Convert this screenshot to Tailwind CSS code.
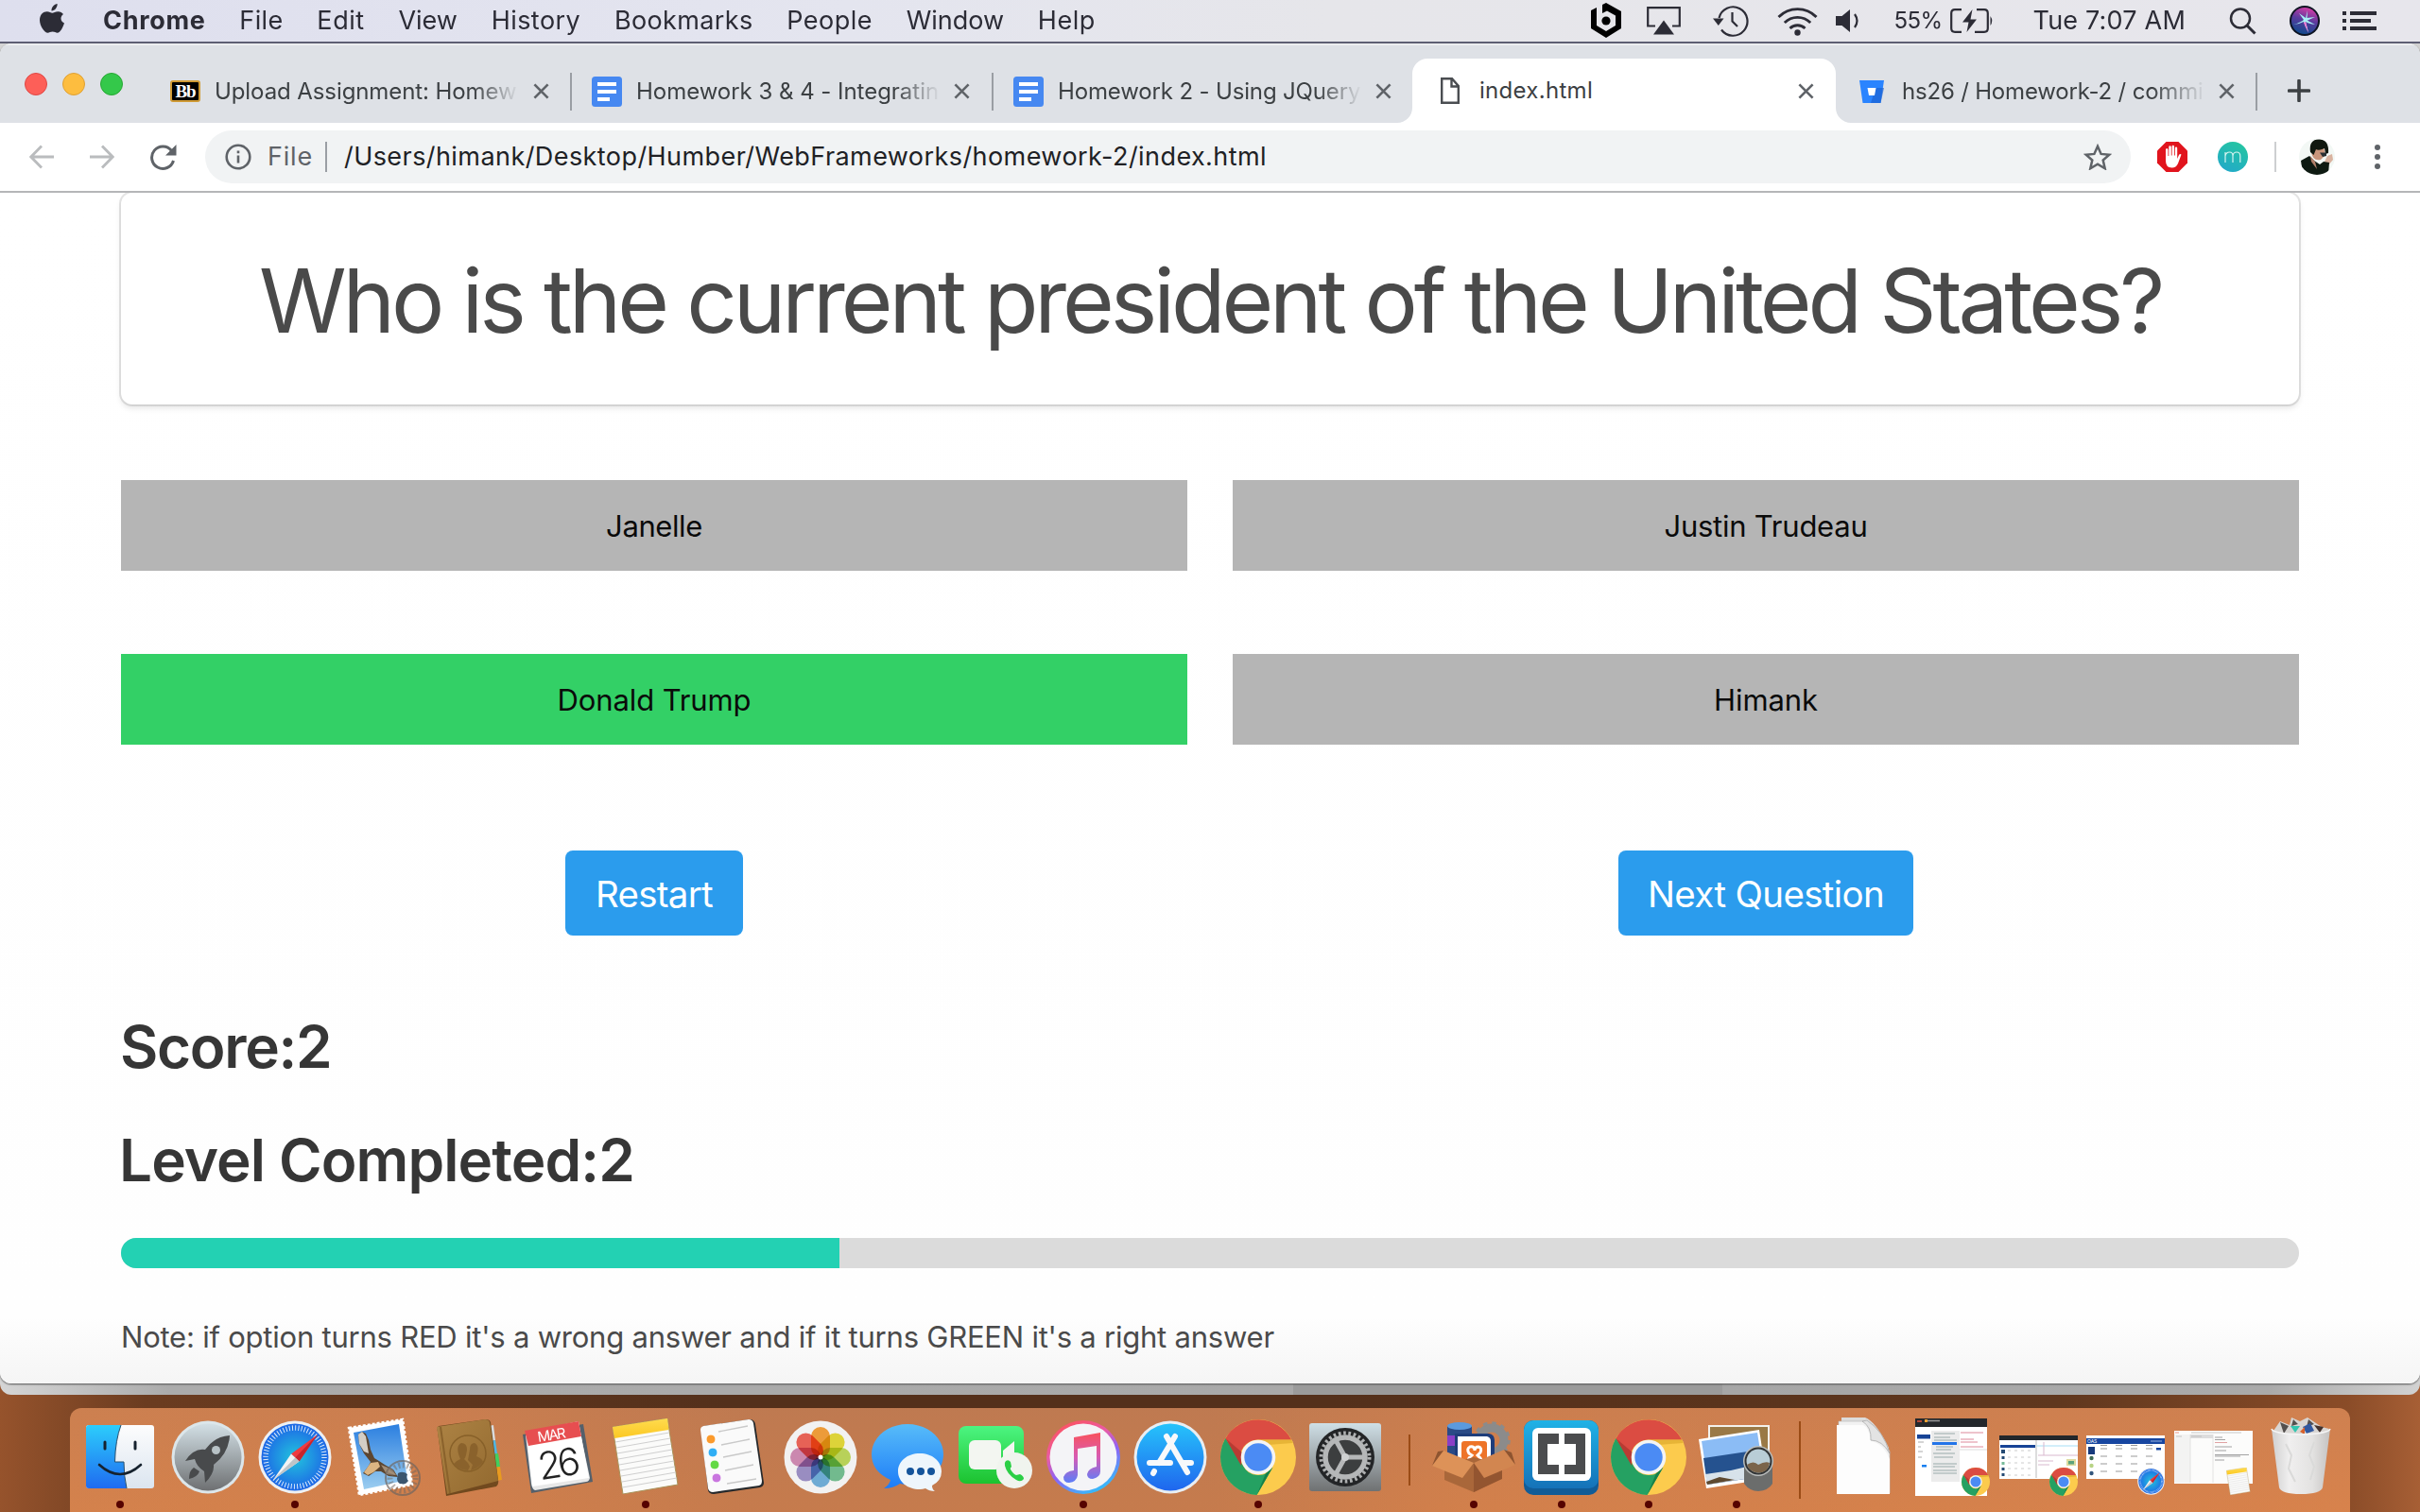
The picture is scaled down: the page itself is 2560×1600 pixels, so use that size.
<!DOCTYPE html>
<html lang="en">
<head>
<meta charset="utf-8">
<title>index.html</title>
<script src="https://cdn.jsdelivr.net/npm/@tailwindcss/browser@4"></script>
</head>
<body class="w-[2560px] h-[1600px] overflow-hidden font-['Inter','Liberation_Sans',sans-serif] bg-[linear-gradient(90deg,#96532c_0%,#6b3c20_6%,#54301b_30%,#54301b_55%,#5f371e_85%,#8a4c28_97%,#a75f35_100%)] flex flex-col">

<svg width="0" height="0" class="absolute">
  <defs>
    <linearGradient id="gFinder" x1="0" y1="0" x2="0" y2="1"><stop offset="0" stop-color="#2ccdfc"/><stop offset="1" stop-color="#1f6bf0"/></linearGradient>
    <linearGradient id="gWhite" x1="0" y1="0" x2="0" y2="1"><stop offset="0" stop-color="#fdfdfd"/><stop offset="1" stop-color="#dbe5f0"/></linearGradient>
    <linearGradient id="gRocket" x1="0" y1="0" x2="0" y2="1"><stop offset="0" stop-color="#d3e0e6"/><stop offset="1" stop-color="#6e7072"/></linearGradient>
    <radialGradient id="gSafari"><stop offset="0" stop-color="#22c4dd"/><stop offset="1" stop-color="#1d67e6"/></radialGradient>
    <linearGradient id="gSky" x1="0" y1="0" x2="0" y2="1"><stop offset="0" stop-color="#2b7fe0"/><stop offset="1" stop-color="#9bcdf0"/></linearGradient>
    <linearGradient id="gBook" x1="0" y1="0" x2="1" y2="1"><stop offset="0" stop-color="#ad8344"/><stop offset="1" stop-color="#92692f"/></linearGradient>
    <linearGradient id="gMsg" x1="0" y1="0" x2="0" y2="1"><stop offset="0" stop-color="#57bcf9"/><stop offset="1" stop-color="#1d7cf8"/></linearGradient>
    <linearGradient id="gFace" x1="0" y1="0" x2="0" y2="1"><stop offset="0" stop-color="#4cf581"/><stop offset="1" stop-color="#1cc22f"/></linearGradient>
    <linearGradient id="gTunes" x1="0.2" y1="0" x2="0.7" y2="1"><stop offset="0" stop-color="#ff5257"/><stop offset=".35" stop-color="#e85ba8"/><stop offset=".6" stop-color="#8e62f5"/><stop offset="1" stop-color="#2cc3fb"/></linearGradient>
    <linearGradient id="gNote" x1="0" y1="0" x2="0" y2="1"><stop offset="0" stop-color="#f9525c"/><stop offset=".5" stop-color="#d65bb5"/><stop offset="1" stop-color="#5c7df8"/></linearGradient>
    <linearGradient id="gStore" x1="0" y1="0" x2="0" y2="1"><stop offset="0" stop-color="#26c3fb"/><stop offset="1" stop-color="#1f66ee"/></linearGradient>
    <linearGradient id="gPref" x1="0" y1="0" x2="0" y2="1"><stop offset="0" stop-color="#cfdfe6"/><stop offset="1" stop-color="#6f7172"/></linearGradient>
    <linearGradient id="gBrk" x1="0" y1="0" x2="0" y2="1"><stop offset="0" stop-color="#20b2e6"/><stop offset="1" stop-color="#1572b8"/></linearGradient>
    <linearGradient id="gYel" x1="0" y1="0" x2="0" y2="1"><stop offset="0" stop-color="#ffdb4f"/><stop offset="1" stop-color="#fbc823"/></linearGradient>
    <linearGradient id="gTrash" x1="0" y1="0" x2="1" y2="0"><stop offset="0" stop-color="#cfcfcf"/><stop offset=".3" stop-color="#f0efef"/><stop offset=".7" stop-color="#e3e2e1"/><stop offset="1" stop-color="#c4c2c1"/></linearGradient>
    <linearGradient id="gM" x1=".8" y1="0" x2=".3" y2="1"><stop offset="0" stop-color="#25c6a0"/><stop offset="1" stop-color="#22aac8"/></linearGradient>
    <linearGradient id="gSiri" x1=".6" y1="0" x2=".3" y2="1"><stop offset="0" stop-color="#d23ca6"/><stop offset=".45" stop-color="#5a3b9e"/><stop offset="1" stop-color="#0d4a8c"/></linearGradient>
    <clipPath id="cAv"><circle cx="19" cy="19" r="19"/></clipPath>

    <symbol id="chrome" viewBox="0 0 80 80">
      <circle cx="40" cy="40" r="40" fill="#fccb4d"/>
      <path d="M5.4 20A40 40 0 0 1 75.200 21.500H40A18.500 18.500 0 0 0 22 46Z" fill="#db4c42"/>
      <path d="M5.400 20A40 40 0 0 0 38.500 80L55.500 50.500A18 18 0 0 1 24 49Z" fill="#25a162"/>
      <path d="M40 21.500H75.200L76.500 25L50 27Z" fill="#d9a528" opacity=".6"/>
      <path d="M38.500 80L55.500 50.500L48 57Z" fill="#178048"/>
      <path d="M5.400 20L22 49L23 35Z" fill="#b83b33"/>
      <circle cx="40" cy="40" r="18.300" fill="#f4f4f4"/><circle cx="40" cy="40" r="14.700" fill="#4b8bf4"/>
    </symbol>
    <symbol id="safari" viewBox="0 0 78 78">
      <circle cx="39" cy="39" r="38.500" fill="#eef0f2"/><circle cx="39" cy="39" r="35.500" fill="url(#gSafari)"/>
      <circle cx="39" cy="39" r="31" fill="none" stroke="#fff" stroke-width="5.500" stroke-dasharray="1 2.246" opacity=".85"/>
      <path d="M63 15L43.500 43.500L35 35.500Z" fill="#ee3b40"/><path d="M63 15L43.500 43.500L39.300 39.400Z" fill="#c8252c"/>
      <path d="M16 63L35 35.500L43.500 43.500Z" fill="#f3f3f3"/><path d="M16 63L39.300 39.400L43.500 43.500Z" fill="#bfc4c8"/>
    </symbol>
    <symbol id="notes" viewBox="0 0 70 80">
      <path d="M0 9L58 0L69 70L11 80Z" fill="#fbfbfa" stroke="#a8925a" stroke-width="1"/>
      <path d="M0 9L58 0L59.500 12L2 21Z" fill="url(#gYel)"/>
      <path d="M3 25L60 15M4 31L61 21M5 37L62 27M6 43L63 33M7 49L64 39M8 55L65 45M9 61L66 51M10 67L67 57M10.500 73L68 63" stroke="#cfcfcf" stroke-width="1"/>
    </symbol>
    <symbol id="docs" viewBox="0 0 32 32"><rect width="32" height="32" rx="3.500" fill="#4688f1"/><path d="M6 8H26M6 16H26M6 24H19" stroke="#fff" stroke-width="4"/></symbol>
    <symbol id="close" viewBox="0 0 18 18"><path d="M1.500 1.500L16.500 16.500M16.500 1.500L1.500 16.500" stroke="#5f6368" stroke-width="2.800"/></symbol>
  </defs>
</svg>

<!-- macOS menu bar -->
<header class="h-[44px] shrink-0 bg-[linear-gradient(90deg,#dedfee_0%,#e4e5ef_35%,#e6e6ea_55%,#e7e6ec_100%)] flex items-center text-[27px] text-[#2c2c36] whitespace-nowrap">
  <svg class="ml-[41px] w-[28px] h-[32px] mb-[5px] shrink-0" viewBox="0 0 28 32"><path d="M19.600 0C19.800 2 19 3.900 17.900 5.200C16.700 6.600 15 7.500 13.500 7.400C13.300 5.500 14.100 3.600 15.200 2.400C16.400 1 18.200.1 19.600 0ZM26 11C22.500 13.200 22.600 18.500 27 20.500C25.700 24.600 22.800 30.800 19.700 30.800C17.800 30.800 17 29.600 14.600 29.600C12.200 29.600 11.300 30.800 9.500 30.800C6 30.800 1 23.500 1 17.300C1 11.500 4.800 8.300 8.700 8.300C11.100 8.300 12.900 9.700 14.300 9.700C15.700 9.700 17.900 8.100 20.600 8.200C22.800 8.300 24.800 9.300 26 11Z" fill="#2c2c36"/></svg>
  <nav class="ml-[40px] pt-[1px] flex gap-[35.700px]">
    <span class="font-bold tracking-[0.7px]">Chrome</span><span class="tracking-[0.4px]">File</span><span class="tracking-[0.56px]">Edit</span><span>View</span><span class="tracking-[0.46px]">History</span><span class="tracking-[0.36px]">Bookmarks</span><span class="tracking-[0.5px]">People</span><span>Window</span><span class="tracking-[0.5px]">Help</span>
  </nav>
  <div class="flex items-center ml-auto mr-[45px]">
    <svg class="w-[34px] h-[38px]" viewBox="0 0 34 38"><path d="M17 0L33 9V27L17 37L1 27V8L7 5V24L17 30L27 24V13.500L18 8.500L13 11V2Z" fill="#000"/><circle cx="17" cy="19" r="4.600"/></svg>
    <svg class="ml-[26px] w-[36px] h-[30px]" viewBox="0 0 36 30"><path d="M9 20.500H1.200V1.200H34.800V20.500H27" fill="none" stroke="#2c2c36" stroke-width="2.200"/><path d="M18 14.500L29 29.500H7Z" fill="#2c2c36"/></svg>
    <svg class="ml-[34px] w-[38px] h-[34px]" viewBox="0 0 38 34"><path d="M6.500 14A15.200 15.200 0 1 1 9 26.500" fill="none" stroke="#2c2c36" stroke-width="2.200"/><path d="M0 14.500H11.500L5.800 22Z" fill="#2c2c36"/><path d="M20.500 8V17.500L26 23" fill="none" stroke="#2c2c36" stroke-width="2.200"/></svg>
    <svg class="ml-[30px] w-[43px] h-[31px]" viewBox="0 0 43 31"><g fill="none" stroke="#2c2c36" stroke-width="2.900"><path d="M1.500 11A28 28 0 0 1 41.500 11"/><path d="M7.800 17A19.500 19.500 0 0 1 35.200 17"/><path d="M13.500 23A11.500 11.500 0 0 1 29.500 23"/></g><circle cx="21.500" cy="27.500" r="3.200" fill="#2c2c36"/></svg>
    <svg class="ml-[18px] w-[27px] h-[26px]" viewBox="0 0 27 26"><path d="M1 8H7.500L16 1V25L7.500 18H1Z" fill="#2c2c36"/><path d="M21 6Q26 13 21 20" fill="none" stroke="#2c2c36" stroke-width="2.200"/></svg>
    <span class="ml-[36px] text-[24px] tracking-[-0.6px]">55%</span>
    <svg class="ml-[8px] w-[46px] h-[26px]" viewBox="0 0 46 26"><path d="M12 1.200H5Q1.200 1.200 1.200 5V21Q1.200 24.800 5 24.800H12M28 1.200H36Q39.800 1.200 39.800 5V21Q39.800 24.800 36 24.800H26" fill="none" stroke="#2c2c36" stroke-width="2.200"/><path d="M23.500 1L13 14.500H19.500L17.500 25L28 11.500H21.500Z" fill="#2c2c36"/><path d="M42.500 8Q46 13 42.500 18Z" fill="#2c2c36"/></svg>
    <span class="ml-[42px] pt-[1px] tracking-[0.2px]">Tue 7:07 AM</span>
    <svg class="ml-[46px] w-[30px] h-[29px]" viewBox="0 0 30 29"><circle cx="12" cy="11.500" r="10" fill="none" stroke="#2c2c36" stroke-width="2.500"/><path d="M19 19L27.500 27.500" stroke="#2c2c36" stroke-width="3"/></svg>
    <svg class="ml-[34px] w-[32px] h-[32px]" viewBox="0 0 32 32"><circle cx="16" cy="16" r="16" fill="#0d1322"/><circle cx="16" cy="16" r="14" fill="url(#gSiri)"/><path d="M4 20Q12 18 16 14Q21 17 27 20Q20 19 17 17L20 28Q16 22 15 17Q9 20 4 20ZM15 15L10 8L17 13L19 5L18.500 13L27 12L18 16Z" fill="#a8f0f5"/><path d="M17 17L20 29L15 18Z" fill="#fa6fd0"/></svg>
    <svg class="ml-[24px] w-[37px] h-[20px]" viewBox="0 0 37 20"><path d="M0 2H4M0 10H4M0 18H4M8 2H36M8 10H30M8 18H36" stroke="#2c2c36" stroke-width="4"/></svg>
  </div>
</header>
<div class="h-[2px] bg-[#5e5f74] shrink-0"></div>

<!-- Stacked windows -->
<div class="shrink-0 pb-[12px] rounded-b-[12px] bg-[linear-gradient(90deg,#d5d5d5_0px,#ababab_180px,#a9a9a9_1368px,#9b9b9b_1368px,#9b9b9b_1822px,#a6a6a6_1822px,#aaa_2400px,#d2d2d2_2560px)]">
<div class="relative h-[1418px] bg-white rounded-[12px] overflow-hidden flex flex-col shadow-[0_1px_2px_#555]">
  <!-- Tab strip -->
  <div class="h-[84px] shrink-0 bg-[#dee1e6] flex border-t-2 border-[#eceef0] text-[24px] text-[#3c4043] whitespace-nowrap">
    <div class="flex items-center w-[605px] h-[82px] shrink-0 pt-[15px]">
      <div class="flex gap-[16px] ml-[26px] mt-[-15px]">
        <i class="size-[24px] rounded-full bg-[#fd5f58] border border-[#df4744]"></i><i class="size-[24px] rounded-full bg-[#fdbd3f] border border-[#dea034]"></i><i class="size-[24px] rounded-full bg-[#34c84a] border border-[#27a833]"></i>
      </div>
      <div class="ml-[50px] w-[32px] h-[23px] rounded-[3px] bg-black border-2 border-[#cf9a35] flex items-center justify-center font-['Liberation_Serif',serif] font-bold text-[19px] leading-none text-white tracking-[-1px]">Bb</div>
      <div class="ml-[15px] w-[322px] [mask-image:linear-gradient(90deg,#000_85%,transparent_100%)] tracking-[-0.09px]">Upload Assignment: Homew</div>
      <svg class="ml-[15px] size-[17px]"><use href="#close"/></svg>
      <i class="ml-auto w-[2px] h-[40px] bg-[#9a9ea4]"></i>
    </div>
    <div class="flex items-center w-[446px] h-[82px] shrink-0 pt-[15px]">
      <svg class="ml-[21px] size-[32px]"><use href="#docs"/></svg>
      <div class="ml-[15px] w-[322px] [mask-image:linear-gradient(90deg,#000_85%,transparent_100%)] tracking-[-0.03px]">Homework 3 &amp; 4 - Integratin</div>
      <svg class="ml-[14px] size-[17px]"><use href="#close"/></svg>
      <i class="ml-auto w-[2px] h-[40px] bg-[#9a9ea4]"></i>
    </div>
    <div class="flex items-center w-[443px] h-[82px] shrink-0 pt-[15px]">
      <svg class="ml-[21px] size-[32px]"><use href="#docs"/></svg>
      <div class="ml-[15px] w-[322px] [mask-image:linear-gradient(90deg,#000_85%,transparent_100%)] tracking-[-0.15px]">Homework 2 - Using JQuery</div>
      <svg class="ml-[14px] size-[17px]"><use href="#close"/></svg>
    </div>
    <div class="relative flex items-center w-[448px] h-[68px] mt-[14px] shrink-0 bg-white rounded-t-[16px]">
      <svg class="absolute bottom-0 left-[-16px] size-[16px]" viewBox="0 0 16 16"><path d="M16 0V16H0A16 16 0 0 0 16 0Z" fill="#fff"/></svg>
      <svg class="absolute bottom-0 right-[-16px] size-[16px]" viewBox="0 0 16 16"><path d="M0 0V16H16A16 16 0 0 1 0 0Z" fill="#fff"/></svg>
      <svg class="ml-[30px] w-[20px] h-[28px]" viewBox="0 0 20 28"><path d="M1.200 1.200H12L18.800 9V26.800H1.200ZM11.500 1.200V9.500H18.800" fill="none" stroke="#4a4d51" stroke-width="2.400"/></svg>
      <span class="ml-[21px] tracking-[0.3px]">index.html</span>
      <svg class="ml-auto mr-[23px] size-[17px]"><use href="#close"/></svg>
    </div>
    <div class="flex items-center w-[446px] h-[82px] shrink-0 pt-[15px]">
      <svg class="ml-[25px] w-[26px] h-[24px]" viewBox="0 0 26 24"><path d="M0 0H26L22.500 24H3.500Z" fill="#2a84ff"/><path d="M9 8H26L22.500 24H12L17 8.500Z" fill="#1a5fd0" opacity=".65"/><path d="M8.500 8H17.500L16 16H10Z" fill="#fff"/></svg>
      <div class="ml-[19px] w-[322px] [mask-image:linear-gradient(90deg,#000_82%,transparent_100%)] tracking-[-0.19px]">hs26 / Homework-2 / commi</div>
      <svg class="ml-[13px] size-[17px]"><use href="#close"/></svg>
      <i class="ml-auto w-[2px] h-[40px] bg-[#9a9ea4]"></i>
    </div>
    <svg class="ml-[32px] mt-[36px] size-[24px]" viewBox="0 0 24 24"><path d="M12 1.500V22.500M1.500 12H22.500" stroke="#3c4043" stroke-width="3.600" stroke-linecap="round"/></svg>
  </div>

  <!-- Toolbar -->
  <div class="h-[72px] shrink-0 bg-white flex items-center text-[27px] whitespace-nowrap">
    <svg class="ml-[31px] w-[26px] h-[26px]" viewBox="0 0 26 26"><path d="M26 13H2.500M13 1.500L1.800 13L13 24.500" fill="none" stroke="#babcbe" stroke-width="2.800"/></svg>
    <svg class="ml-[38px] w-[26px] h-[26px]" viewBox="0 0 26 26"><path d="M0 13H23.500M13 1.500L24.200 13L13 24.500" fill="none" stroke="#babcbe" stroke-width="2.800"/></svg>
    <svg class="ml-[38px] w-[28px] h-[27px]" viewBox="0 0 28 27"><path d="M22.500 6.500A11.700 11.700 0 1 0 24.500 17" fill="none" stroke="#5f6368" stroke-width="3"/><path d="M27.500 0V11.500H16Z" fill="#5f6368"/></svg>
    <div class="ml-[30px] w-[2037px] h-[56px] rounded-full bg-[#f1f3f4] flex items-center">
      <svg class="ml-[21px] size-[28px]" viewBox="0 0 28 28"><circle cx="14" cy="14" r="12.300" fill="none" stroke="#5f6368" stroke-width="2.600"/><path d="M14 12.500V20.500M14 7.500V10.300" stroke="#5f6368" stroke-width="2.600"/></svg>
      <span class="ml-[17px] pt-[1px] w-[48px] text-[#5f6368] tracking-[0.8px]">File</span>
      <i class="ml-[13px] w-[2px] h-[32px] bg-[#9a9ea4]"></i>
      <span class="ml-[18px] pt-[1px] text-[#202124] tracking-[0.43px]">/Users/himank/Desktop/Humber/WebFrameworks/homework-2/index.html</span>
      <svg class="ml-auto mr-[20px] w-[30px] h-[28px]" viewBox="0 0 30 28"><path d="M15 2.800L18.600 10.900L27.400 11.700L20.700 17.500L22.700 26.200L15 21.600L7.300 26.200L9.300 17.500L2.600 11.700L11.400 10.900Z" fill="none" stroke="#5f6368" stroke-width="2.500"/></svg>
    </div>
    <svg class="ml-[28px] size-[32px]" viewBox="0 0 32 32"><path d="M9.500 0H22.500L32 9.500V22.500L22.500 32H9.500L0 22.500V9.500Z" fill="#e1141d"/><path d="M9 8.500Q9 7 10.200 7T11.500 8.500V15H12.300V5.500Q12.300 4.200 13.500 4.200T14.800 5.500V14.500H15.600V5Q15.600 3.800 16.800 3.800T18 5V14.500H18.800V6.800Q18.800 5.500 20 5.500T21.200 6.800V18L23 14Q24 12.500 25.500 13.500L22 23Q20 27.500 15.500 27.500Q9 27.500 9 20Z" fill="#fff"/></svg>
    <svg class="ml-[32px] size-[32px]" viewBox="0 0 32 32"><circle cx="16" cy="16" r="16" fill="url(#gM)"/><path d="M8 22V11M8 15Q9 11 12.500 11Q16 11 16 15V22M16 15Q16.500 11 20 11Q23.800 11 23.800 15V22" fill="none" stroke="#d5f3f0" stroke-width="1.200"/></svg>
    <i class="ml-[28px] w-[2px] h-[32px] bg-[#cdcfd1]"></i>
    <svg class="ml-[24px] size-[38px]" viewBox="0 0 38 38"><g clip-path="url(#cAv)"><rect width="38" height="38" fill="#f3f8f5"/><path d="M13 13Q14 24 23 22L28 17L26 9L16 8Z" fill="#c9957b"/><path d="M12 14Q10 0 22 0.500Q32 1 31 15L28 16L27 10Q21 13 18 11L15.500 17Z" fill="#10180f"/><path d="M22 14.500H29V18L25 19Z" fill="#2a3034"/><path d="M30 18L35 16L36 22L31 28L27 24Z" fill="#d9b3a0"/><path d="M2 23L11 18L16 23L22 27L26 24L32 25L31 38H4Z" fill="#0e1a12"/><path d="M12 18L17 24L19 32L13 24Z" fill="#b07f6a"/></g></svg>
    <svg class="ml-[42px] w-[6px] h-[26px]" viewBox="0 0 6 26"><g fill="#5f6368"><circle cx="3" cy="3" r="3"/><circle cx="3" cy="13" r="3"/><circle cx="3" cy="23" r="3"/></g></svg>
  </div>
  <div class="h-[2px] shrink-0 bg-[#b5b6b8]"></div>

  <!-- Quiz page -->
  <main class="flex-1 overflow-hidden px-[128px] flex flex-col text-[#4a4a4a] bg-[linear-gradient(180deg,#fff_0px,#fefefe_1190px,#f5f5f5_1260px)]">
    <div class="h-[224px] shrink-0 rounded-[12px] bg-white shadow-[0_4px_6px_rgba(10,10,10,0.1),0_0_0_2px_rgba(10,10,10,0.1)] flex items-center justify-center pt-[4px]">
      <h1 class="text-[94px] leading-none whitespace-nowrap tracking-[-4.1px]">Who is the current president of the United States?</h1>
    </div>
    <div class="mt-[80px] grid grid-cols-2 gap-x-[48px] gap-y-[88px] text-[31px] text-[#0a0a0a]">
      <div class="h-[96px] bg-[#b5b5b5] flex items-center justify-center pt-[2px] tracking-[-0.4px]">Janelle</div>
      <div class="h-[96px] bg-[#b5b5b5] flex items-center justify-center pt-[2px] tracking-[-0.24px]">Justin Trudeau</div>
      <div class="h-[96px] bg-[#33d066] flex items-center justify-center pt-[2px] tracking-[-0.12px]">Donald Trump</div>
      <div class="h-[96px] bg-[#b5b5b5] flex items-center justify-center pt-[2px] tracking-[-0.09px]">Himank</div>
    </div>
    <div class="mt-[112px] grid grid-cols-2 gap-x-[48px] text-[38.500px] text-white">
      <div class="flex justify-center"><button class="w-[188px] h-[90px] rounded-[8px] bg-[#2b9ced] flex items-center justify-center pt-[3px] tracking-[-0.75px]">Restart</button></div>
      <div class="flex justify-center"><button class="w-[312px] h-[90px] rounded-[8px] bg-[#2b9ced] flex items-center justify-center pt-[3px] whitespace-nowrap tracking-[-0.65px]">Next Question</button></div>
    </div>
    <h2 class="mt-[82px] text-[62px] leading-[72px] font-semibold text-[#363636] tracking-[-1.3px] ml-[-1px]">Score:2</h2>
    <h2 class="mt-[48px] text-[62px] leading-[72px] font-semibold text-[#363636] tracking-[-0.9px] ml-[-2px]">Level Completed:2</h2>
    <div class="mt-[46px] h-[32px] shrink-0 rounded-full bg-[#dbdbdb] overflow-hidden"><div class="h-full w-[33%] bg-[#23d1b3]"></div></div>
    <p class="mt-[49px] text-[31px] leading-[48px] whitespace-nowrap tracking-[-0.22px]">Note: if option turns RED it's a wrong answer and if it turns GREEN it's a right answer</p>
  </main>
</div>
</div>

<!-- Dock -->
<footer class="mt-[14px] ml-[74px] w-[2412px] h-[110px] shrink-0 pl-[7px] rounded-t-[12px] bg-[linear-gradient(180deg,rgba(190,130,95,.25),rgba(225,140,80,.2)),linear-gradient(90deg,#d17f4b_0%,#cf7d4a_15%,#bf774c_30%,#bf774c_50%,#cf7d4a_62%,#d5804b_100%)] flex items-stretch">
  <div class="w-[92.600px] shrink-0"><svg class="w-[92px] h-[110px]" viewBox="0 0 92 110">
    <rect x="10" y="18" width="72" height="67" rx="3" fill="url(#gWhite)"/><path d="M13 18H47Q41 34 40.500 57H50Q50 72 53 85H13Q10 85 10 82V21Q10 18 13 18Z" fill="url(#gFinder)"/><path d="M47 18Q41 34 40.500 57H50Q50 72 53 85" fill="none" stroke="#27506f" stroke-width="1"/><path d="M30 36V43M62 36V43" stroke="#16222e" stroke-width="3" stroke-linecap="round"/><path d="M24 60Q46 80 68 60" fill="none" stroke="#16222e" stroke-width="2.600" stroke-linecap="round"/><circle cx="46" cy="102" r="4" fill="#560300"/></svg></div>
  <div class="w-[92.600px] shrink-0"><svg class="w-[92px] h-[110px]" viewBox="0 0 92 110">
    <circle cx="46" cy="52" r="38.500" fill="#dce6ea"/><circle cx="46" cy="52" r="35.500" fill="url(#gRocket)"/><path d="M69 29Q53 30 43 44Q31 42 22 56L32 54Q34 62 42 67L43 79Q53 69 52 60Q68 48 69 29Z" fill="#484a4c"/><path d="M31 63Q26 66 26 75Q35 73 37 67Z" fill="#484a4c"/><circle cx="54.500" cy="44.500" r="4.500" fill="#b8c2c6"/></svg></div>
  <div class="w-[92.600px] shrink-0"><svg class="w-[92px] h-[110px]" viewBox="0 0 92 110"><use href="#safari" x="7" y="13" width="78" height="78"/><circle cx="46" cy="102" r="4" fill="#560300"/></svg></div>
  <div class="w-[92.600px] shrink-0"><svg class="w-[92px] h-[110px]" viewBox="0 0 92 110">
    <path d="M10 21L67 12L77 81L21 92Z" fill="#fff" stroke="#fff" stroke-width="2.500" stroke-dasharray="3 2"/><path d="M15 26L63 17L72 76L26 86Z" fill="url(#gSky)"/><path d="M20 28L24 25L28 27L31 34L33 44L37 53L42 56L48 60L57 65L62 73L52 72L44 67L38 67L31 72L25 69L31 61L33 57L26 48L21 38Z" fill="#5d4630"/><path d="M20 28L24 25L28 30L31 48L26 46L21 38Z" fill="#d4cec5"/><path d="M44 60L56 65L60 71L50 70Z" fill="#a38e77"/><path d="M33 58L41 57L43 62L36 68L30 71L26 68Z" fill="#dcb583"/><circle cx="67" cy="74" r="18" fill="none" stroke="#6f6560" stroke-width="2" opacity=".7"/><circle cx="67" cy="74" r="13.500" fill="none" stroke="#6f6560" stroke-width="6" stroke-dasharray="2 2.500" opacity=".5"/><path d="M62 69Q67 66 72 70Q70 74 73 77Q69 82 66 80Q62 81 61 75Z" fill="#3b556e"/></svg></div>
  <div class="w-[92.600px] shrink-0"><svg class="w-[92px] h-[110px]" viewBox="0 0 92 110">
    <path d="M66 19L71 18L73 34L68 35Z" fill="#d8dbdc"/><path d="M68 35L73 34L75 48L70 49Z" fill="#4fb7e3"/><path d="M70 49L76 48L78 62L72 63Z" fill="#42cf5e"/><path d="M71 63L78 62L80 76L73 77Z" fill="#e89b20"/><path d="M13 19Q11 21 12 25L21 93L74 83Q77 80 76 76L68 15Q67 12 63 12Z" fill="#71491e"/><path d="M11 20L62 12Q66 12 67 15L76 77L22 91Z" fill="url(#gBook)"/><path d="M15 20L25 90" stroke="#8a622c" stroke-width="2"/><circle cx="44" cy="48" r="19" fill="none" stroke="#876029" stroke-width="1.500"/><path d="M29 59Q31 56 36 54Q30 40 37 37Q43 37 43 44Q42 52 40 54Q44 57 46 62L44 66Q34 66 29 59ZM46 44Q46 37 51 37Q57 40 53 51Q59 53 60 57Q55 64 47 66L49 60L44 55Z" fill="#8a622c"/></svg></div>
  <div class="w-[92.600px] shrink-0"><svg class="w-[92px] h-[110px]" viewBox="0 0 92 110">
    <path d="M9 28L73 17L83 78L18 90Z" fill="#54606b"/><path d="M12 29L68 17L80 74Q79 78 76 78L22 87Q19 86 18 80Z" fill="#e8e8e8"/><path d="M13 26L68 14L79 74L19 83Z" fill="#fff"/><path d="M11 24L68 14L71 30L15 40Z" fill="#e74e50"/>
    <g transform="rotate(-9 46 50)" font-family="Inter, sans-serif" text-anchor="middle"><text x="43" y="33" font-size="15" fill="#fff" textLength="30">MAR</text><text x="46" y="73" font-size="40" font-weight="300" fill="#222" textLength="45">26</text></g></svg></div>
  <div class="w-[92.600px] shrink-0"><svg class="w-[92px] h-[110px]" viewBox="0 0 92 110"><use href="#notes" x="11" y="11" width="70" height="80"/><circle cx="46" cy="102" r="4" fill="#560300"/></svg></div>
  <div class="w-[92.600px] shrink-0"><svg class="w-[92px] h-[110px]" viewBox="0 0 92 110">
    <path d="M13 24Q12 20 16 19L64 12Q69 12 70 17L79 79Q79 83 75 84L26 91Q21 91 20 87Z" fill="#26292c"/><path d="M12 23Q12 20 15 19L63 12Q67 12 68 16L77 77Q77 81 74 82L25 89Q21 89 20 85Z" fill="#fafafa"/><g stroke="#fff" stroke-width="1"><circle cx="23" cy="33" r="5" fill="#fb9a2c"/><circle cx="25" cy="47" r="5" fill="#30aef5"/><circle cx="27" cy="60" r="5" fill="#63d945"/><circle cx="29" cy="74" r="5" fill="#c976df"/></g><path d="M31 25L62 19M34 39L64 33M36 52L66 46M38 66L68 60M40 80L71 75" stroke="#c9c9c9" stroke-width="1.300"/></svg></div>
  <div class="w-[92.600px] shrink-0"><svg class="w-[92px] h-[110px]" viewBox="0 0 92 110">
    <circle cx="46" cy="52" r="38.500" fill="#f2f2f2"/><g class="mix-blend-multiply [&>rect]:mix-blend-multiply"><rect x="36" y="20" width="20" height="32" rx="10" fill="#f9a33c"/><rect x="36" y="20" width="20" height="32" rx="10" fill="#e9df3c" transform="rotate(45 46 52)"/><rect x="36" y="20" width="20" height="32" rx="10" fill="#c2dd5e" transform="rotate(90 46 52)"/><rect x="36" y="20" width="20" height="32" rx="10" fill="#78c496" transform="rotate(135 46 52)"/><rect x="36" y="20" width="20" height="32" rx="10" fill="#74b4e0" transform="rotate(180 46 52)"/><rect x="36" y="20" width="20" height="32" rx="10" fill="#a195cc" transform="rotate(225 46 52)"/><rect x="36" y="20" width="20" height="32" rx="10" fill="#d68fb9" transform="rotate(270 46 52)"/><rect x="36" y="20" width="20" height="32" rx="10" fill="#f3675a" transform="rotate(315 46 52)"/></g><circle cx="46" cy="52" r="2.500" fill="#fff"/></svg></div>
  <div class="w-[92.600px] shrink-0"><svg class="w-[92px] h-[110px]" viewBox="0 0 92 110">
    <path d="M46 17C67 17 84 31 84 49S67 81 46 81Q42 81 38 80Q31 85 21 85Q27 81 28 76Q8 67 8 49C8 31 25 17 46 17Z" fill="url(#gMsg)"/><path d="M59 48C72 48 82 56 82 67Q82 77 72 82Q72 86 75 88Q69 88 65 85Q62 86 59 86C46 86 36 78 36 67S46 48 59 48Z" fill="#eef6fc"/><g fill="#14549b"><circle cx="49" cy="67" r="4"/><circle cx="60" cy="67" r="4"/><circle cx="71" cy="67" r="4"/></g></svg></div>
  <div class="w-[92.600px] shrink-0"><svg class="w-[92px] h-[110px]" viewBox="0 0 92 110">
    <rect x="7" y="19" width="69" height="61" rx="8" fill="url(#gFace)"/><rect x="18" y="34" width="34" height="31" rx="6" fill="#f3f6f1"/><path d="M54 45L66 35V62L54 55Z" fill="#f3f6f1"/><circle cx="66" cy="66" r="19" fill="#f0f4ee"/><path d="M57 56Q60 54 62 57L63 62Q61 64 62 65Q65 70 68 71L72 70Q76 72 76 75Q73 79 68 76Q58 70 56 61Q55 58 57 56Z" fill="#2bcf45"/></svg></div>
  <div class="w-[92.600px] shrink-0"><svg class="w-[92px] h-[110px]" viewBox="0 0 92 110">
    <circle cx="46" cy="52" r="39" fill="url(#gTunes)"/><circle cx="46" cy="52" r="35.500" fill="#f4f4f7"/><path d="M36 31L64 26V67Q64 73 56 75Q50 75 50 70Q51 64 60 62V40L40 43V71Q39 78 31 79Q25 79 25 73Q27 67 36 66Z" fill="url(#gNote)"/><circle cx="46" cy="102" r="4" fill="#560300"/></svg></div>
  <div class="w-[92.600px] shrink-0"><svg class="w-[92px] h-[110px]" viewBox="0 0 92 110">
    <circle cx="46" cy="52" r="38.500" fill="#e9eef2"/><circle cx="46" cy="52" r="35.500" fill="url(#gStore)"/><g stroke="#f7f9fb" stroke-width="6" stroke-linecap="round" fill="none"><path d="M51 30L34 58M42 30L64 68M24 58H46M59 58H68M29 67L28 69"/></g></svg></div>
  <div class="w-[92.600px] shrink-0"><svg class="w-[92px] h-[110px]" viewBox="0 0 92 110"><use href="#chrome" x="6" y="12" width="80" height="80"/><circle cx="46" cy="102" r="4" fill="#560300"/></svg></div>
  <div class="w-[92.600px] shrink-0"><svg class="w-[92px] h-[110px]" viewBox="0 0 92 110">
    <rect x="8" y="16" width="76" height="72" rx="3" fill="url(#gPref)"/><circle cx="46" cy="52" r="31" fill="#232527"/><circle cx="46" cy="52" r="25.500" fill="none" stroke="#aeb0b1" stroke-width="4" stroke-dasharray="2.700 2.640"/><circle cx="46" cy="52" r="21" fill="#3c3e3f" stroke="#b5b7b8" stroke-width="5.500"/><path d="M46 52H66M46 52L36 34M46 52L36 70" stroke="#b5b7b8" stroke-width="5"/><circle cx="46" cy="52" r="4" fill="#cfd1d2"/></svg></div>
  <div class="w-[43px] shrink-0 flex justify-center pt-[28px]"><i class="w-[2px] h-[54px] bg-[#9b4c16]"></i></div>
  <div class="w-[92.600px] shrink-0"><svg class="w-[92px] h-[110px]" viewBox="0 0 92 110">
    <path d="M18 19V55H44V19Z" fill="#2a4a86"/><ellipse cx="31" cy="19" rx="13" ry="4" fill="#5b9ade"/><path d="M18 29V40H44V29Z" fill="#8a3fc6"/><circle cx="65" cy="34" r="13" fill="none" stroke="#8b8b8b" stroke-width="9"/><circle cx="65" cy="34" r="18" fill="none" stroke="#8b8b8b" stroke-width="3.500" stroke-dasharray="4.500 4.900"/><path d="M26 27H62Q68 28 68 34V66H26Z" fill="#1f3d7a"/><path d="M29 30H60Q64 31 64 35V66H29Z" fill="#fff"/><rect x="33" y="35" width="27" height="27" rx="3" fill="#ee7428"/><path d="M42 41Q38 43 41 48L44 50L41 53Q38 58 43 60Q47 60 47 56Q47 60 51 60Q56 58 53 53L50 50L53 47Q55 42 51 41Q47 41 47 45Q47 40 42 41Z" fill="none" stroke="#fff" stroke-width="3"/><path d="M15 60L46 52L76 60V74L46 89L15 76Z" fill="#a9673a"/><path d="M46 58L76 62V75L46 89Z" fill="#935530"/><path d="M14 45L46 58L34 74L2 61Z" fill="#dd9258"/><path d="M78 44L46 58L57 74L90 60Z" fill="#d28650"/><path d="M14 45L2 61L8 46ZM78 44L90 60L86 47Z" fill="#8d5430"/><circle cx="46" cy="102" r="4" fill="#560300"/></svg></div>
  <div class="w-[92.600px] shrink-0"><svg class="w-[92px] h-[110px]" viewBox="0 0 92 110">
    <rect x="6" y="13" width="79" height="79" rx="10" fill="#115c97"/><rect x="6" y="13" width="79" height="72" rx="10" fill="url(#gBrk)"/><rect x="15" y="21" width="62" height="56" rx="6" fill="#fff"/><path d="M43 27H21V70H43V60H31V38H43ZM49 27H71V70H49V60H61V38H49Z" fill="#4b4c4e"/><circle cx="46" cy="102" r="4" fill="#560300"/></svg></div>
  <div class="w-[92.600px] shrink-0"><svg class="w-[92px] h-[110px]" viewBox="0 0 92 110"><use href="#chrome" x="6" y="12" width="80" height="80"/><circle cx="46" cy="102" r="4" fill="#560300"/></svg></div>
  <div class="w-[92.600px] shrink-0"><svg class="w-[92px] h-[110px]" viewBox="0 0 92 110">
    <rect x="16" y="18" width="65" height="55" fill="#f3f1ec"/><rect x="18" y="20" width="61" height="50" fill="#9a7946"/><path d="M6 33L70 23L78 75L14 85Z" fill="#fff"/><path d="M9 35L68 26L71 45L12 54Z" fill="#8bbcf5"/><path d="M11 53L71 44L75 72L15 81Z" fill="#25528f"/><path d="M13 70L40 66L74 58L75 72L15 81Z" fill="#d7e2ea"/><path d="M14 78L28 73L44 76L15 81Z" fill="#5e4930"/><path d="M54 58V80Q60 88 69 88Q80 87 84 80V56Z" fill="#6b6d6c"/><circle cx="69" cy="56" r="16" fill="#b9bcbb"/><circle cx="69" cy="56" r="14.500" fill="#303335"/><circle cx="69" cy="56" r="12.500" fill="#b9cdd6"/><path d="M57 60Q64 55 69 60Q76 56 81 58Q80 68 69 68.500Q60 68 57 60Z" fill="#7a644b"/><circle cx="46" cy="102" r="4" fill="#560300"/></svg></div>
  <div class="w-[42px] shrink-0 flex justify-center pt-[14px]"><i class="w-[2px] h-[82px] bg-[#9b4c16]"></i></div>
  <div class="w-[92.600px] shrink-0"><svg class="w-[92px] h-[110px]" viewBox="0 0 92 110">
    <path d="M23 10H48Q60 15 73 42V88H23Z" fill="#dcdcdc"/><path d="M20 14H48Q62 20 74 46V90H20Z" fill="#f2f2f2" stroke="#bbb" stroke-width=".7"/><path d="M18 18H45Q52 19 54 35Q67 37 74 54V91H18Z" fill="#fdfdfd"/><path d="M45 14Q55 20 54 34Q66 34 74 48Q68 25 50 13Z" fill="#e3e3e3" stroke="#a5a5a5" stroke-width=".7"/></svg></div>
  <div class="w-[92.600px] shrink-0"><svg class="w-[92px] h-[110px]" viewBox="0 0 92 110">
    <rect x="8" y="11" width="76" height="82" fill="#fff"/><rect x="8" y="11" width="76" height="9" fill="#23272b"/><path d="M10 14H15" stroke="#e2503c" stroke-width="1.500"/><path d="M18 13.500H34" stroke="#999" stroke-width="1.500"/><rect x="18" y="12" width="3" height="3" fill="#f0a030"/><rect x="10" y="28" width="14" height="4.500" fill="#174396"/><rect x="25" y="24" width="30" height="54" fill="#ececec"/><path d="M28 27H50M28 31H45M28 34H52M30 41H48M30 44H46M27 48H50M28 52H48M27 59H52M27 62H50M27 66H52M27 69H52" stroke="#9aa" stroke-width="1"/><rect x="26" y="36" width="26" height="3" fill="#2374e8"/><path d="M56 26H80M56 33H70M56 36H74M56 41H80" stroke="#d89" stroke-width="1"/><rect x="15" y="60" width="5" height="2.500" fill="#1880f0"/><path d="M11 36H17M11 41H14M11 46H16M11 52H15" stroke="#aaa" stroke-width="1"/><path d="M55 44H84" stroke="#ddd"/><use href="#chrome" x="57" y="63" width="30" height="30"/></svg></div>
  <div class="w-[92.600px] shrink-0"><svg class="w-[92px] h-[110px]" viewBox="0 0 92 110">
    <rect x="5" y="29" width="83" height="46" fill="#fff"/><rect x="5" y="29" width="83" height="5" fill="#23272b"/><rect x="6" y="39" width="37" height="3" fill="#174396"/><path d="M44 34V74" stroke="#bbb"/><g fill="#264b74"><rect x="7" y="44" width="4" height="4"/><rect x="7.500" y="51" width="3" height="3"/><rect x="7.500" y="57" width="3" height="3" fill="#7b9"/><rect x="7.500" y="63" width="3" height="3"/><rect x="7.500" y="69" width="3" height="3"/></g><path d="M14 45H42M14 52H42M14 58H42M14 64H42M14 71H42" stroke="#ccc" stroke-dasharray="3 4"/><path d="M44 40H88" stroke="#a6def5"/><path d="M52 36V50M46 56H62M46 60H58M46 50H88" stroke="#d9b9cf"/><rect x="76" y="54" width="10" height="7" fill="#dedba0"/><rect x="78" y="56" width="6" height="3.500" fill="#5da37d"/><use href="#chrome" x="58" y="63" width="30" height="30"/></svg></div>
  <div class="w-[92.600px] shrink-0"><svg class="w-[92px] h-[110px]" viewBox="0 0 92 110">
    <rect x="4" y="29" width="83" height="46" fill="#fff"/><rect x="4" y="32" width="83" height="6" fill="#1746a0"/><text x="5" y="37" font-size="5" fill="#fff" font-family="Inter, sans-serif">OAS</text><path d="M72 35H84" stroke="#9bb3e0"/><rect x="6" y="41" width="7" height="8" fill="#173a7c"/><circle cx="9.500" cy="53" r="2.200" fill="#3e6b54"/><circle cx="9.500" cy="61" r="2.200" fill="#b7d384"/><circle cx="9.500" cy="69" r="2.200" fill="#33567c"/><path d="M19 39.500H80M19 43H80M19 51H80M19 59H80M19 67H60" stroke="#999" stroke-dasharray="7 9"/><rect x="78" y="42" width="5" height="2.500" fill="#1746a0"/><use href="#safari" x="58" y="63" width="29" height="29"/></svg></div>
  <div class="w-[92.600px] shrink-0"><svg class="w-[92px] h-[110px]" viewBox="0 0 92 110">
    <rect x="4" y="24" width="83" height="56" fill="#fcfcfb"/><rect x="4" y="28" width="17" height="51" fill="#f3f3f2"/><rect x="21" y="28" width="24" height="4" fill="#ddd"/><path d="M21 28V79M45 28V79" stroke="#ddd" stroke-width=".8"/><path d="M5 26H9" stroke="#e98" stroke-width="1"/><path d="M22 26H75M6 30H12M22 30H33" stroke="#bbb" stroke-width=".8"/><path d="M47 31H55M47 33.500H58M47 41H65M47 45H59M47 49.500H83M47 51H74M47 55H57" stroke="#999" stroke-width=".9"/><path d="M47 36.500H60" stroke="#d99" stroke-width=".9"/><use href="#notes" x="59" y="63" width="26" height="29"/></svg></div>
  <div class="w-[92.600px] shrink-0"><svg class="w-[92px] h-[110px]" viewBox="0 0 92 110">
    <path d="M17 24L24 14L34 18L36 10L45 14L53 10L68 20L76 22L70 30H22Z" fill="#d9d6d3"/><path d="M24 15L33 19L28 27ZM38 12L43 17L36 19ZM54 12L60 17L52 20Z" fill="#54504e"/><path d="M35 19H45L40 26Z" fill="#33c6b0"/><path d="M48 20L56 16L60 24L52 27Z" fill="#3058a0"/><path d="M60 18L70 20L66 26Z" fill="#43322d"/><path d="M45 25L50 20L50 28Z" fill="#d7622e"/><path d="M15 22Q16 27 46 28Q76 27 77 22L69 84Q67 91 46 91Q25 91 23 84Z" fill="url(#gTrash)"/><path d="M15 22Q16 27 46 28Q76 27 77 22" fill="none" stroke="#f5f5f5" stroke-width="1.500"/><path d="M30 38L36 50L33 64L40 78M60 36L55 50L60 62L56 76" stroke="#dadad9" stroke-width="2" fill="none"/></svg></div>
</footer>
</body>
</html>
